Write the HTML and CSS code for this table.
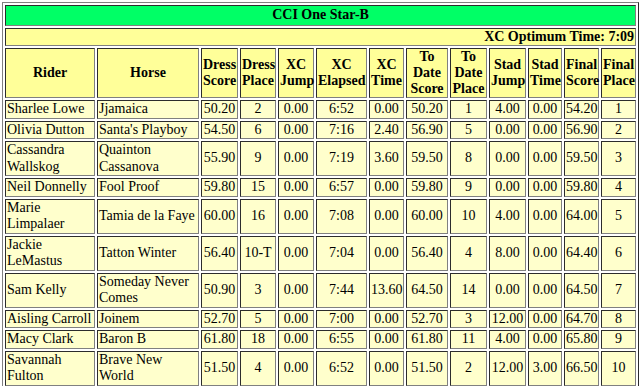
FILE: index.html
```
<!DOCTYPE html>
<html>
<head>
<meta charset="utf-8">
<link rel="stylesheet" href="styles.css">
</head>
<body>
<table class="results">
<colgroup>
<col class="c-rider"><col class="c-horse"><col class="c-ds"><col class="c-dp"><col class="c-xj"><col class="c-xe"><col class="c-xt"><col class="c-tds"><col class="c-tdp"><col class="c-sj"><col class="c-st"><col class="c-fs"><col class="c-fp">
</colgroup>
<tr><td colspan="13" class="title">CCI One Star-B</td></tr>
<tr><td colspan="13" class="optimum">XC Optimum Time: 7:09</td></tr>
<tr class="head">
<th>Rider</th><th>Horse</th><th>Dress Score</th><th>Dress Place</th><th>XC Jump</th><th>XC Elapsed</th><th>XC Time</th><th>To Date Score</th><th>To Date Place</th><th>Stad Jump</th><th>Stad Time</th><th>Final Score</th><th>Final Place</th>
</tr>
<tr><td class="name">Sharlee Lowe</td><td class="name">Jjamaica</td><td>50.20</td><td>2</td><td>0.00</td><td>6:52</td><td>0.00</td><td>50.20</td><td>1</td><td>4.00</td><td>0.00</td><td>54.20</td><td>1</td></tr>
<tr><td class="name">Olivia Dutton</td><td class="name">Santa's Playboy</td><td>54.50</td><td>6</td><td>0.00</td><td>7:16</td><td>2.40</td><td>56.90</td><td>5</td><td>0.00</td><td>0.00</td><td>56.90</td><td>2</td></tr>
<tr><td class="name">Cassandra Wallskog</td><td class="name">Quainton Cassanova</td><td>55.90</td><td>9</td><td>0.00</td><td>7:19</td><td>3.60</td><td>59.50</td><td>8</td><td>0.00</td><td>0.00</td><td>59.50</td><td>3</td></tr>
<tr><td class="name">Neil Donnelly</td><td class="name">Fool Proof</td><td>59.80</td><td>15</td><td>0.00</td><td>6:57</td><td>0.00</td><td>59.80</td><td>9</td><td>0.00</td><td>0.00</td><td>59.80</td><td>4</td></tr>
<tr><td class="name">Marie Limpalaer</td><td class="name">Tamia de la Faye</td><td>60.00</td><td>16</td><td>0.00</td><td>7:08</td><td>0.00</td><td>60.00</td><td>10</td><td>4.00</td><td>0.00</td><td>64.00</td><td>5</td></tr>
<tr><td class="name">Jackie LeMastus</td><td class="name">Tatton Winter</td><td>56.40</td><td>10-T</td><td>0.00</td><td>7:04</td><td>0.00</td><td>56.40</td><td>4</td><td>8.00</td><td>0.00</td><td>64.40</td><td>6</td></tr>
<tr><td class="name">Sam Kelly</td><td class="name">Someday Never Comes</td><td>50.90</td><td>3</td><td>0.00</td><td>7:44</td><td>13.60</td><td>64.50</td><td>14</td><td>0.00</td><td>0.00</td><td>64.50</td><td>7</td></tr>
<tr><td class="name">Aisling Carroll</td><td class="name">Joinem</td><td>52.70</td><td>5</td><td>0.00</td><td>7:00</td><td>0.00</td><td>52.70</td><td>3</td><td>12.00</td><td>0.00</td><td>64.70</td><td>8</td></tr>
<tr><td class="name">Macy Clark</td><td class="name">Baron B</td><td>61.80</td><td>18</td><td>0.00</td><td>6:55</td><td>0.00</td><td>61.80</td><td>11</td><td>4.00</td><td>0.00</td><td>65.80</td><td>9</td></tr>
<tr><td class="name">Savannah Fulton</td><td class="name">Brave New World</td><td>51.50</td><td>4</td><td>0.00</td><td>6:52</td><td>0.00</td><td>51.50</td><td>2</td><td>12.00</td><td>3.00</td><td>66.50</td><td>10</td></tr>
</table>
</body>
</html>
```
FILE: styles.css
```
html, body {
  margin: 0;
  padding: 0;
  background: #ffffff;
}
body {
  padding: 2px 0 0 2px;
}
.results {
  width: 637px;
  table-layout: fixed;
  border: 1px outset #808080;
  border-spacing: 2px;
  font-family: "Liberation Serif", "Times New Roman", serif;
  font-size: 14px;
  line-height: 16.5px;
  color: #000;
}
.results td, .results th {
  border: 1px inset #808080;
  padding: 0 1px;
  background: #ffffcc;
  text-align: center;
  vertical-align: middle;
}
.results th {
  background: #ffff99;
  font-weight: bold;
  line-height: 16px;
}
.results td.name {
  text-align: left;
}
.results td.title {
  background: #00ff66;
  font-weight: bold;
  text-align: center;
  padding: 1px;
}
.results td.optimum {
  background: #ffff99;
  font-weight: bold;
  text-align: right;
}
.c-rider { width: 90px; }
.c-horse { width: 102px; }
.c-ds { width: 37px; }
.c-dp { width: 36px; }
.c-xj { width: 36px; }
.c-xe { width: 51px; }
.c-xt { width: 35px; }
.c-tds { width: 42px; }
.c-tdp { width: 37px; }
.c-sj { width: 37px; }
.c-st { width: 34px; }
.c-fs { width: 35px; }
.c-fp { width: 35px; }
```
